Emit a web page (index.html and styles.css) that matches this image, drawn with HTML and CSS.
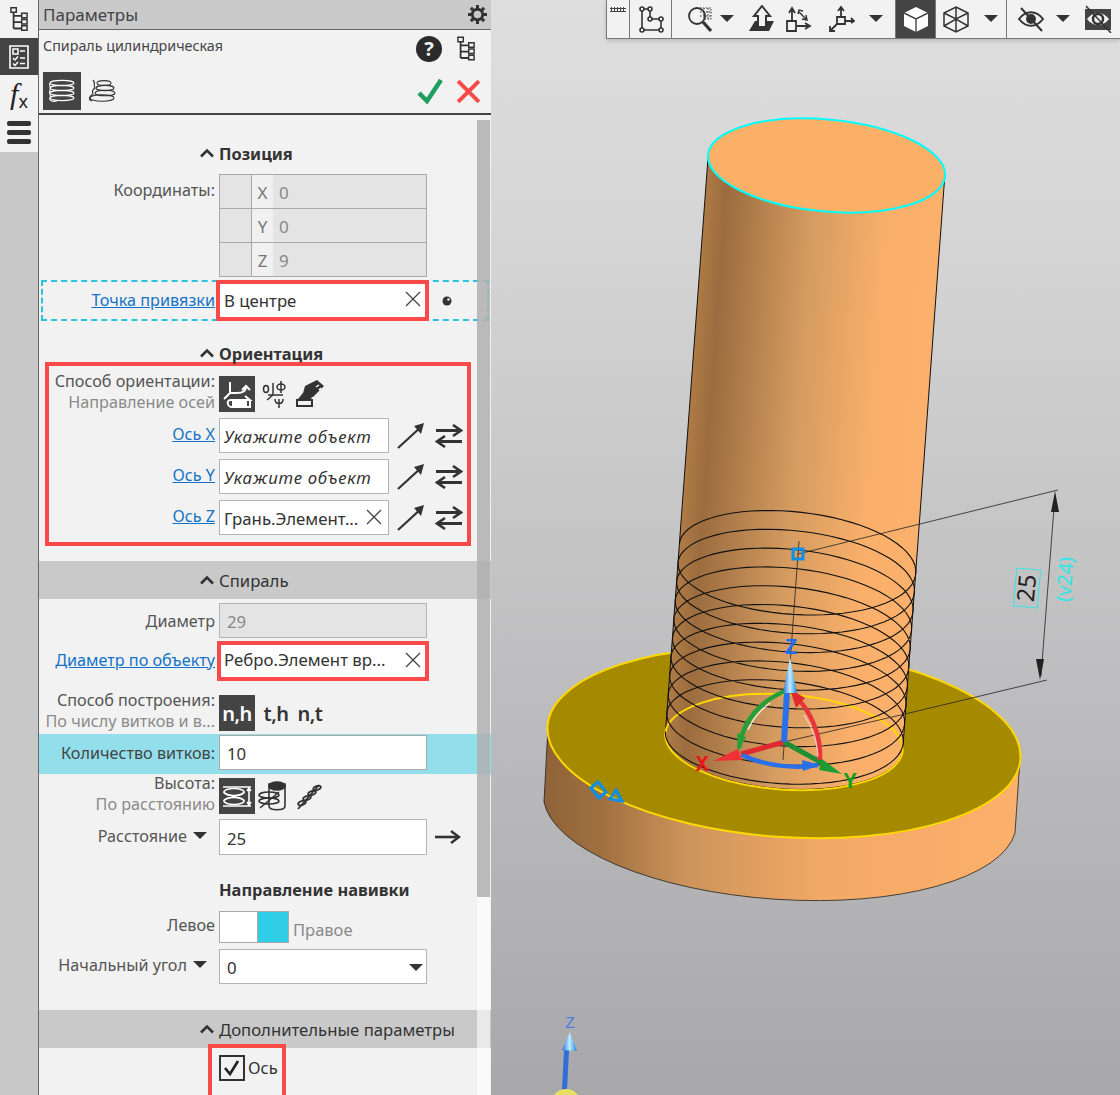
FILE: index.html
```html
<!DOCTYPE html>
<html lang="ru">
<head>
<meta charset="utf-8">
<title>Параметры</title>
<link rel="stylesheet" href="styles.css">
</head>
<body>
<svg class="defs" aria-hidden="true">
  <symbol id="tree" viewBox="0 0 20 26">
    <path d="M4 3V23M4 9H14M4 16H14M4 23H14" fill="none" stroke="currentColor" stroke-width="2"/>
    <path d="M1 0H7V5H1ZM13 6H19V11H13ZM13 13H19V18H13ZM13 20H19V25H13Z" fill="#f2f2f2" stroke="currentColor" stroke-width="1.6"/>
  </symbol>
  <symbol id="chev" viewBox="0 0 16 10"><path d="M2 8.5L8 2.5L14 8.5" fill="none" stroke="#333" stroke-width="2.6"/></symbol>
  <symbol id="caret" viewBox="0 0 14 8"><path d="M0 0H14L7 7Z" fill="#333"/></symbol>
  <symbol id="cross" viewBox="0 0 16 16"><path d="M1 1L15 15M15 1L1 15" stroke="#444" stroke-width="1.3" fill="none"/></symbol>
  <symbol id="diag" viewBox="0 0 28 26"><path d="M1 25L25 3" stroke="#333" stroke-width="2.2"/><path d="M27 0L24 11L17 3Z" fill="#333"/></symbol>
  <symbol id="swap" viewBox="0 0 28 24">
    <path d="M1 6.5H25M27 17.5H3" stroke="#333" stroke-width="2.8" fill="none"/>
    <path d="M18 1L26 6.500L18 12M10 12L2 17.500L10 23" stroke="#333" stroke-width="2.6" fill="none"/>
  </symbol>
</svg>

<div class="app">
  <nav class="rail">
    <div class="rail-btn"><svg class="ico-tree"><use href="#tree"/></svg></div>
    <div class="rail-btn rail-active">
      <svg class="ico-list" viewBox="0 0 20 24">
        <path d="M1 1H19V23H1Z" fill="none" stroke="#fff" stroke-width="1.600"/>
        <path d="M4 4H9V9H4Z" fill="none" stroke="#fff" stroke-width="1.500"/>
        <path d="M11 6H16M11 13H16M11 18.500H16M4 13L6 15L9 11.500M4 18.500L6 20.500L9 17" fill="none" stroke="#fff" stroke-width="1.500"/>
      </svg>
    </div>
    <div class="rail-btn rail-fx"><span class="fx-f">f</span><span class="fx-x">x</span></div>
    <div class="rail-btn rail-menu"><i class="bar"></i><i class="bar"></i><i class="bar"></i></div>
  </nav>

  <section class="panel">
    <header class="titlebar">
      <span class="title">Параметры</span>
      <svg class="ico-gear" viewBox="0 0 20 20">
        <circle cx="10" cy="10" r="5.500" fill="none" stroke="#333" stroke-width="3"/>
        <path d="M10 0V4M10 16V20M0 10H4M16 10H20M3 3L6 6M14 14L17 17M17 3L14 6M6 14L3 17" stroke="#333" stroke-width="3.200"/>
      </svg>
    </header>

    <div class="cmd">
      <div class="cmd-top">
        <span class="cmd-name">Спираль цилиндрическая</span>
        <div class="cmd-tools">
          <div class="help">?</div>
          <svg class="ico-tree-sm"><use href="#tree"/></svg>
        </div>
      </div>
      <div class="cmd-bottom">
        <div class="tab tab-active">
          <svg class="ico-spiral" viewBox="0 0 30 28" fill="none" stroke="#fff" stroke-width="1.100">
            <ellipse cx="15" cy="6" rx="12" ry="2.600"/><ellipse cx="15" cy="11" rx="12" ry="2.600"/><ellipse cx="15" cy="16" rx="12" ry="2.600"/><ellipse cx="15" cy="21" rx="12" ry="2.600"/>
            <path d="M3 6C1 9 5 10 3 13C1 16 5 18 3 21C2 24 6 25 10 24"/>
          </svg>
        </div>
        <div class="tab">
          <svg class="ico-spiral" viewBox="0 0 30 28" fill="none" stroke="#333" stroke-width="1.100">
            <ellipse cx="17" cy="6" rx="7" ry="2.400"/><ellipse cx="18" cy="11" rx="9" ry="2.600"/><ellipse cx="18" cy="16" rx="10" ry="2.800"/><ellipse cx="15" cy="21" rx="12" ry="3.200"/>
            <path d="M6 3C9 6 6 8 8 11C5 13 5 15 6 17C2 19 1 23 5 24"/>
          </svg>
        </div>
        <div class="cmd-actions">
          <svg class="ico-ok" viewBox="0 0 26 26"><path d="M2 15L10 23L24 2" fill="none" stroke="#1f9d5c" stroke-width="4.500"/></svg>
          <svg class="ico-no" viewBox="0 0 24 24"><path d="M2 2L22 22M22 2L2 22" fill="none" stroke="#f94a4a" stroke-width="3.800"/></svg>
        </div>
      </div>
    </div>

    <div class="scroll">
      <div class="thumb"></div>
      <div class="track"></div>

      <div class="head head-first">
        <span class="head-chev"><svg class="ico-chev"><use href="#chev"/></svg></span>
        <b class="head-text">Позиция</b>
      </div>

      <div class="row coord-row">
        <span class="label label-top">Координаты:</span>
        <div class="coords">
          <div class="coord"><i class="c-blank"></i><span class="c-axis">X</span><span class="c-val">0</span></div>
          <div class="coord"><i class="c-blank"></i><span class="c-axis">Y</span><span class="c-val">0</span></div>
          <div class="coord"><i class="c-blank"></i><span class="c-axis">Z</span><span class="c-val">9</span></div>
        </div>
      </div>

      <div class="anchor">
        <a class="link label anchor-label">Точка привязки</a>
        <div class="redfield anchor-field"><span>В центре</span><svg class="ico-cross"><use href="#cross"/></svg></div>
        <svg class="ico-dot" viewBox="0 0 10 10"><circle cx="5" cy="5" r="4.500" fill="#333"/><circle cx="6.500" cy="3.500" r="1.200" fill="#fff"/></svg>
      </div>

      <div class="head head-orient">
        <span class="head-chev"><svg class="ico-chev"><use href="#chev"/></svg></span>
        <b class="head-text">Ориентация</b>
      </div>

      <div class="redbox">
        <div class="row-in row-icons">
          <div class="label label-stack"><span>Способ ориентации:</span><span class="sub">Направление осей</span></div>
          <div class="iconset">
            <div class="sq sq-active">
              <svg class="ico-sq" viewBox="0 0 36 36" fill="none" stroke="#fff" stroke-width="2">
                <path d="M11 6V17L5 23M11 17H18C25 17 27 14 27 11M23 14L27 10L31 14"/><path d="M26 20L31 24H12C9 24 8 26 9 28C9 30 12 31 14 31H31V24"/><path d="M13 25H28V30H13Z" fill="#fff" stroke="none"/>
              </svg>
            </div>
            <div class="sq">
              <svg class="ico-sq" viewBox="0 0 36 36" fill="none" stroke="#333" stroke-width="1.500">
                <path d="M18 7V19L12 24M13 19H28"/><ellipse cx="11" cy="13" rx="2.500" ry="3.500"/><ellipse cx="26" cy="11" rx="4" ry="3"/><path d="M26 5V17"/><path d="M20 23C20 29 28 29 28 23M24 23V32"/>
              </svg>
            </div>
            <div class="sq">
              <svg class="ico-sq" viewBox="0 0 36 36">
                <path d="M14 10L26 4L33 10L22 21H11Z" fill="#333"/><path d="M6 24H21V30H6Z" fill="#f2f2f2" stroke="#333" stroke-width="2"/><path d="M7 23L12 17H23L20 23Z" fill="#333"/><path d="M25 11L28 9M28 14L30 12" stroke="#fff" stroke-width="1.500"/>
              </svg>
            </div>
          </div>
        </div>
        <div class="row-in row-axis row-x">
          <a class="link label">Ось X</a>
          <div class="field field-short field-hint">Укажите объект</div>
          <svg class="ico-diag"><use href="#diag"/></svg><svg class="ico-swap"><use href="#swap"/></svg>
        </div>
        <div class="row-in row-axis">
          <a class="link label">Ось Y</a>
          <div class="field field-short field-hint">Укажите объект</div>
          <svg class="ico-diag"><use href="#diag"/></svg><svg class="ico-swap"><use href="#swap"/></svg>
        </div>
        <div class="row-in row-axis">
          <a class="link label">Ось Z</a>
          <div class="field field-short field-between field-clear"><span>Грань.Элемент...</span><svg class="ico-cross"><use href="#cross"/></svg></div>
          <svg class="ico-diag"><use href="#diag"/></svg><svg class="ico-swap"><use href="#swap"/></svg>
        </div>
      </div>

      <div class="band band-spiral">
        <span class="head-chev"><svg class="ico-chev"><use href="#chev"/></svg></span>
        <span class="head-text">Спираль</span>
      </div>

      <div class="row row-diam">
        <span class="label">Диаметр</span>
        <div class="field field-wide field-off">29</div>
      </div>

      <div class="row row-obj">
        <a class="link label">Диаметр по объекту</a>
        <div class="redfield obj-field"><span>Ребро.Элемент вр...</span><svg class="ico-cross"><use href="#cross"/></svg></div>
      </div>

      <div class="row row-build">
        <div class="label label-stack"><span>Способ построения:</span><span class="sub">По числу витков и в...</span></div>
        <div class="iconset">
          <div class="sq sq-active sq-text">n,h</div>
          <div class="sq sq-text">t,h</div>
          <div class="sq sq-text">n,t</div>
        </div>
      </div>

      <div class="row row-turns">
        <span class="label">Количество витков:</span>
        <div class="field field-wide field-num">10</div>
      </div>

      <div class="row row-height">
        <div class="label label-stack"><span>Высота:</span><span class="sub">По расстоянию</span></div>
        <div class="iconset">
          <div class="sq sq-active">
            <svg class="ico-sq" viewBox="0 0 36 36" fill="none" stroke="#fff" stroke-width="1.600">
              <path d="M4 9H32M4 28H32"/><ellipse cx="15" cy="14" rx="10" ry="3.500"/><ellipse cx="15" cy="23" rx="10" ry="3.500"/><path d="M5 14C5 18 25 19 25 23M25 14C25 18 5 19 5 23"/><path d="M30 10V27M28 13L30 10L32 13M28 24L30 27L32 24"/>
            </svg>
          </div>
          <div class="sq">
            <svg class="ico-sq" viewBox="0 0 36 36" fill="none" stroke="#333" stroke-width="1.600">
              <path d="M14 6V28C14 33 30 33 30 28V6Z"/><ellipse cx="22" cy="8" rx="8" ry="4" fill="#333"/><ellipse cx="14" cy="17" rx="10" ry="3"/><ellipse cx="14" cy="23" rx="10" ry="3"/><path d="M5 30L24 14"/>
            </svg>
          </div>
          <div class="sq">
            <svg class="ico-sq" viewBox="0 0 36 36" fill="none" stroke="#333" stroke-width="1.800">
              <path d="M7 31L28 7"/><ellipse cx="11" cy="25" rx="4" ry="2" transform="rotate(-20 11 25)"/><ellipse cx="16" cy="20" rx="4" ry="2" transform="rotate(-20 16 20)"/><ellipse cx="21" cy="15" rx="4" ry="2" transform="rotate(-20 21 15)"/><ellipse cx="26" cy="10" rx="4" ry="2" transform="rotate(-20 26 10)"/>
            </svg>
          </div>
        </div>
      </div>

      <div class="row row-dist">
        <span class="label label-drop"><span>Расстояние</span><svg class="ico-caret"><use href="#caret"/></svg></span>
        <div class="field field-wide field-num">25</div>
        <svg class="ico-right" viewBox="0 0 26 14"><path d="M0 7H23" stroke="#333" stroke-width="2.600"/><path d="M16 1L24 7L16 13" fill="none" stroke="#333" stroke-width="2.400"/></svg>
      </div>

      <div class="row row-wind"><span></span><b class="head-text">Направление навивки</b></div>

      <div class="row row-toggle">
        <span class="label">Левое</span>
        <div class="toggle"><i class="t-off"></i><i class="t-on"></i></div>
        <span class="toggle-label">Правое</span>
      </div>

      <div class="row row-angle">
        <span class="label label-drop"><span>Начальный угол</span><svg class="ico-caret"><use href="#caret"/></svg></span>
        <div class="field field-wide field-num field-between"><span>0</span><svg class="ico-caret ico-caret-in"><use href="#caret"/></svg></div>
      </div>

      <div class="band band-extra">
        <span class="head-chev"><svg class="ico-chev"><use href="#chev"/></svg></span>
        <span class="head-text">Дополнительные параметры</span>
      </div>

      <div class="check-red">
        <svg class="ico-check" viewBox="0 0 26 26"><rect x="1" y="1" width="24" height="24" fill="#f2f2f2" stroke="#333" stroke-width="2"/><path d="M6 13L11 19L19 6" fill="none" stroke="#222" stroke-width="2.600"/></svg>
        <span class="check-text">Ось</span>
      </div>
    </div>
  </section>

  <main class="view">
    <svg class="scene" viewBox="491 0 629 1095">
      <defs>
        <linearGradient id="discSide" gradientUnits="userSpaceOnUse" x1="544" y1="0" x2="1020" y2="0">
          <stop offset="0" stop-color="#8f6238"/><stop offset=".12" stop-color="#a0703f"/><stop offset=".3" stop-color="#cd945a"/><stop offset=".6" stop-color="#f3aa66"/><stop offset="1" stop-color="#fbb06b"/>
        </linearGradient>
        <linearGradient id="shaft" gradientUnits="userSpaceOnUse" x1="686" y1="445" x2="925" y2="462">
          <stop offset="0" stop-color="#b07c46"/><stop offset=".09" stop-color="#9b6c3e"/><stop offset=".45" stop-color="#d49b60"/><stop offset=".78" stop-color="#fab06a"/><stop offset="1" stop-color="#fbb16b"/>
        </linearGradient>
        <linearGradient id="coneZ" x1="0" y1="0" x2="1" y2="0"><stop offset="0" stop-color="#2a6fe0"/><stop offset=".5" stop-color="#bdeeff"/><stop offset="1" stop-color="#2a80e0"/></linearGradient>
      </defs>

      <path d="M548 727L544 802A237 90 4 0 0 1015 833L1020 759Z" fill="url(#discSide)" stroke="#222" stroke-width=".8"/>
      <ellipse cx="784" cy="742.500" rx="237" ry="94.500" transform="rotate(4 784 742.500)" fill="#a58a00" stroke="#ffd800" stroke-width="2"/>

      <path d="M708 158L665.300 733.700A119 47.500 4 0 0 902.700 750.300L945 173Z" fill="url(#shaft)" stroke="#111" stroke-width="1"/>
      <ellipse cx="784" cy="742" rx="119" ry="47.500" transform="rotate(4 784 742)" fill="none" stroke="#ffd800" stroke-width="2"/>
      <ellipse cx="826.500" cy="165.500" rx="119" ry="46" transform="rotate(5.200 826.500 165.500)" fill="#fbb068" stroke="#00ffff" stroke-width="2"/>

      <path class="helix" id="helix" d=""/>

      <path class="thin" d="M799 541L783 760M798 554L1058 490M905 714L1047 680M784 742L905 714"/>
      <path class="thin" d="M1055 495L1041 676"/>
      <path d="M1055 491L1051 512H1059ZM1040 680L1036 659H1044Z" fill="#222"/>
      <g transform="rotate(-85 1027 588)">
        <rect class="dimbox" x="1008" y="576" width="38" height="24"/>
        <text class="dim" x="1027" y="596">25</text>
        <text class="dim dim-cyan" x="1039" y="632">(v24)</text>
      </g>

      <rect class="grip" x="793" y="549" width="10" height="10"/>
      <path class="grip" d="M591 788L598 782L606 792L599 798Z"/>
      <path class="grip" d="M610 799L616 790L622 801Z"/>

      <path d="M741 754L784 742" stroke="#e02a30" stroke-width="5" fill="none"/>
      <path d="M784 742L822 763" stroke="#1f8f35" stroke-width="5" fill="none"/>
      <path d="M784 742L787 692" stroke="#2a70e8" stroke-width="6" fill="none"/>
      <path d="M788 690C760 700 742 722 739 748" stroke="#25a038" stroke-width="4.500" fill="none"/>
      <path d="M748 730C752 720 758 712 770 703" stroke="#e4f4e4" stroke-width="1.400" fill="none"/>
      <path d="M737 733L746 737L738 752Z" fill="#25a038"/>
      <path d="M792 692C812 712 821 735 820 760" stroke="#e8343a" stroke-width="4.500" fill="none"/>
      <path d="M804 715C812 726 817 742 818 756" stroke="#f8c8c8" stroke-width="1.200" fill="none"/>
      <path d="M790 689L805 698L796 708Z" fill="#e02a30"/>
      <path d="M742 755C765 766 795 769 818 765" stroke="#2a70e8" stroke-width="4.500" fill="none"/>
      <path d="M802 760L820 765L803 771Z" fill="#2a70e8"/>
      <path d="M790 657L797 693L783 693Z" fill="url(#coneZ)"/>
      <path d="M713 761L738 749L742 760Z" fill="#ee3238"/>
      <path d="M842 774L822 759L819 770Z" fill="#1e9c34"/>
      <text class="axis axis-z" x="791" y="654">Z</text>
      <text class="axis axis-x" x="702" y="771">X</text>
      <text class="axis axis-y" x="850" y="788">Y</text>

      <path d="M564 1050L569 1050L567 1090L562 1090Z" fill="#2f6fd8"/>
      <path d="M570 1032L577 1051L562 1050Z" fill="url(#coneZ)"/>
      <circle cx="566" cy="1104" r="15" fill="#e6e060"/>
      <text class="axis-small" x="570" y="1028">Z</text>
    </svg>

    <div class="toolbar">
      <div class="tb-cell tb-grip"><i class="dots"></i></div>
      <div class="tb-cell tb-sketch">
        <svg class="tb-ico" viewBox="0 0 28 28" fill="none" stroke="#333" stroke-width="1.600">
          <path d="M5 4V25H24V14H13V4Z"/><circle cx="5" cy="4" r="2" fill="#f2f2f2"/><circle cx="13" cy="4" r="2" fill="#f2f2f2"/><circle cx="13" cy="14" r="2" fill="#f2f2f2"/><circle cx="24" cy="14" r="2" fill="#f2f2f2"/><circle cx="5" cy="25" r="2" fill="#f2f2f2"/><circle cx="24" cy="25" r="2" fill="#f2f2f2"/>
        </svg>
      </div>
      <div class="tb-group tb-middle">
        <svg class="tb-ico" viewBox="0 0 28 28" fill="none" stroke="#333">
          <circle cx="11" cy="11" r="8" stroke-width="1.800"/><path d="M17 17L25 26" stroke-width="3.200"/><path d="M14 3H25V14H17M14 7H25M14 11H25M18 3V14M22 3V14" stroke-width="1" stroke-dasharray="1.500 1.500"/>
        </svg>
        <svg class="tb-caret tb-caret-a"><use href="#caret"/></svg>
        <svg class="tb-ico tb-up" viewBox="0 0 28 28"><path d="M14 1L22 11H18V22H10V11H6Z" fill="#f2f2f2" stroke="#333" stroke-width="2"/><path d="M7 16H10V23H18V16H26L21 26H1Z" fill="#333"/></svg>
        <svg class="tb-ico tb-rot" viewBox="0 0 28 28" fill="none" stroke="#333" stroke-width="1.800"><path d="M3 16H12V26H3Z"/><path d="M8 15V5M5 8L8 3L11 8M13 21H24M21 18L26 21L21 24"/><path d="M14 6L22 14M14 9L15 5L19 6M22 10L23 15L18 14" stroke-width="1.400"/></svg>
        <svg class="tb-ico tb-axes" viewBox="0 0 28 28" fill="none" stroke="#333" stroke-width="1.800"><path d="M10 12H18V19H10Z"/><path d="M14 12V3M11 6L14 2L17 6M18 16H27M24 13L27 16L24 18M10 19L3 26M3 21V26H8"/></svg>
        <svg class="tb-caret tb-caret-b"><use href="#caret"/></svg>
      </div>
      <div class="tb-cell tb-active">
        <svg class="tb-ico" viewBox="0 0 28 28"><path d="M14 2L26 8V21L14 27L2 21V8Z" fill="#fff"/><path d="M2 8L14 14L26 8M14 14V27" stroke="#444" stroke-width="1.400" fill="none"/></svg>
      </div>
      <div class="tb-group tb-wire">
        <svg class="tb-ico" viewBox="0 0 28 28" fill="none" stroke="#333" stroke-width="1.500"><path d="M14 2L26 8V21L14 27L2 21V8ZM2 8L14 14L26 8M14 14V27M2 21L14 14L26 21M14 2V14"/></svg>
        <svg class="tb-caret tb-caret-c"><use href="#caret"/></svg>
      </div>
      <div class="tb-group tb-eyes">
        <svg class="tb-ico" viewBox="0 0 28 28" fill="none" stroke="#333" stroke-width="2"><path d="M2 14C9 5 19 5 26 14C19 23 9 23 2 14Z"/><circle cx="14" cy="14" r="4" fill="#333"/><path d="M4 3L25 26"/></svg>
        <svg class="tb-caret tb-caret-d"><use href="#caret"/></svg>
        <svg class="tb-ico tb-last" viewBox="0 0 28 28"><path d="M1 4H27V25H1Z" fill="#444"/><path d="M3 14C9 6 19 6 25 14C19 22 9 22 3 14Z" fill="#f2f2f2"/><circle cx="14" cy="14" r="5" fill="none" stroke="#333" stroke-width="2.500"/><path d="M2 1L27 28" stroke="#333" stroke-width="1.500"/></svg>
      </div>
    </div>
  </main>
</div>
<script src="script.js"></script>
</body>
</html>
```

FILE: styles.css
```css
* { box-sizing: border-box; }
html, body { margin: 0; padding: 0; }
body {
  width: 1120px;
  height: 1095px;
  overflow: hidden;
  font-family: "Noto Sans", "Open Sans", sans-serif;
  font-size: 16.5px;
  color: #333;
}
.defs { width: 0; height: 0; display: block; }
.app { display: flex; width: 1120px; height: 1095px; overflow: hidden; }

/* left rail */
.rail { width: 38px; flex: none; background: #c8c8c8; display: flex; flex-direction: column; }
.rail-btn { height: 38px; background: #f2f2f2; color: #333; display: flex; align-items: center; justify-content: center; }
.rail-active { background: #444; height: 37px; }
.rail-fx { height: 38px; }
.rail-menu { height: 39px; flex-direction: column; gap: 4px; }
.bar { display: block; width: 24px; height: 5px; border-radius: 2px; background: #333; }
.ico-tree { width: 18px; height: 25px; }
.ico-list { width: 20px; height: 24px; }
.fx-f { font: italic 30px/38px "Liberation Serif", serif; color: #222; }
.fx-x { font: 18px/18px "Noto Sans", sans-serif; margin-top: 14px; color: #222; }

/* panel */
.panel { width: 453px; flex: none; border-left: 1px solid #666; background: #f2f2f2; display: flex; flex-direction: column; height: 1095px; overflow: hidden; }
.titlebar { height: 30px; flex: none; background: #c9c9c9; border-bottom: 1px solid #666; display: flex; align-items: center; justify-content: space-between; padding: 0 3px 0 4px; }
.title { font-size: 17px; color: #444; }
.ico-gear { width: 19px; height: 19px; margin-bottom: 1px; margin-right: 1px; }
.cmd { height: 85px; flex: none; border-bottom: 2px solid #444; display: flex; flex-direction: column; padding: 0 8px 2px 4px; }
.cmd-top { height: 40px; display: flex; justify-content: space-between; align-items: flex-start; }
.cmd-name { font-size: 14.300px; line-height: 18px; margin-top: 7px; color: #444; }
.cmd-tools { display: flex; align-items: center; gap: 15px; padding-top: 6px; padding-right: 8px; }
.help { width: 26px; height: 26px; border-radius: 50%; background: #2b2b2b; color: #f2f2f2; font-weight: 700; font-size: 20px; line-height: 26px; text-align: center; }
.ico-tree-sm { width: 18px; height: 26px; color: #333; }
.cmd-bottom { flex: 1; display: flex; align-items: flex-start; padding-top: 2px; }
.tab { width: 38px; height: 38px; display: flex; align-items: center; justify-content: center; margin-right: 2px; }
.tab-active { background: #444; }
.ico-spiral { width: 30px; height: 28px; }
.cmd-actions { margin-left: auto; display: flex; align-items: center; gap: 13px; padding-top: 6px; padding-right: 2px; }
.ico-ok { width: 26px; height: 26px; }
.ico-no { width: 25px; height: 25px; }

/* scroll body */
.scroll { position: relative; flex: 1; min-height: 0; overflow: hidden; }
.thumb { position: absolute; z-index: 2; left: 438px; top: 5px; width: 13px; height: 777px; background: rgba(176, 176, 176, .85); }
.track { position: absolute; z-index: 2; left: 438px; top: 782px; width: 13px; height: 200px; background: rgba(255, 255, 255, .6); }

.head, .band { height: 38px; display: grid; grid-template-columns: 176px 1fr; column-gap: 4px; align-items: center; }
.head-first { margin-top: 19px; }
.head-orient { margin-top: 13px; }
.head-chev { display: flex; justify-content: flex-end; }
.ico-chev { width: 16px; height: 10px; }
.head-text { font-size: 16.700px; color: #333; }
b.head-text { font-weight: 700; font-size: 16.400px; }
.band { background: #c9c9c9; }
.band-spiral { margin-top: 15px; }
.band-extra { margin-top: 26px; }

.row { display: grid; grid-template-columns: 176px auto 1fr; column-gap: 4px; align-items: center; }
.label { display: block; text-align: right; color: #555; font-size: 16.200px; line-height: 20px; white-space: nowrap; }
.label-top { align-self: start; margin-top: 6px; }
.link { color: #1272c9; text-decoration: underline; }
.label-stack { display: flex; flex-direction: column; align-items: flex-end; line-height: 21px; margin-top: -4px; }
.sub { color: #8a8a8a; }
.label-drop { display: flex; justify-content: flex-end; align-items: center; gap: 6px; padding-right: 8px; }
.ico-caret { width: 14px; height: 8px; }
.ico-caret-in { margin-right: -1px; }

.coord-row { margin-top: 2px; }
.coords { width: 208px; border: 1px solid #aaa; border-bottom: 0; }
.coord { display: flex; height: 34px; border-bottom: 1px solid #aaa; background: #e4e4e4; color: #888; font-size: 17px; }
.c-blank { width: 32px; border-right: 1px solid #aaa; }
.c-axis { width: 21px; background: #f0f0f0; text-align: center; line-height: 36px; color: #777; }
.c-val { padding-left: 6px; line-height: 36px; }

.anchor { margin: 3px 2px 0 2px; height: 41px; border: 2px dashed #2cc3de; border-radius: 0; display: grid; grid-template-columns: 172px 213px auto; align-items: center; column-gap: 1px; }
.anchor-label { margin-top: -2px; }
.redfield { background: #fff; border: 4px solid #f94a4a; display: flex; align-items: center; justify-content: space-between; color: #333; padding: 0 4px 0 4px; font-size: 16.800px; }
.anchor-field { height: 41px; margin: -2px 0; }
.ico-cross { width: 16px; height: 16px; flex: none; margin-top: -3px; }
.ico-dot { width: 10px; height: 10px; margin-left: 12px; }

.redbox { margin: -10px 0 0 6px; width: 426px; height: 184px; border: 4px solid #f94a4a; }
.row-in { display: grid; grid-template-columns: 166px auto auto auto; column-gap: 4px; align-items: center; justify-content: start; }
.row-icons { margin-top: 9px; height: 36px; grid-template-columns: 166px auto; }
.row-axis { margin-top: 6px; }
.row-x { margin-top: 7px; }
.row-axis .label { align-self: start; margin-top: 6px; }

.field { height: 35px; background: #fff; border: 1px solid #b4b4b4; display: flex; align-items: center; padding: 2px 4px 0; color: #333; white-space: nowrap; font-size: 16.800px; }
.field-short { width: 170px; }
.field-wide { width: 208px; }
.field-num { padding-left: 7px; }
.field-hint { font-style: italic; letter-spacing: .7px; }
.field-between { justify-content: space-between; }
.field-clear { padding-right: 6px; }
.field-off { background: #e4e4e4; color: #888; padding-left: 7px; }
.ico-diag { width: 28px; height: 26px; margin-left: 4px; }
.ico-swap { width: 28px; height: 24px; margin-left: 6px; }

.iconset { display: flex; }
.sq { width: 36px; height: 36px; display: flex; align-items: center; justify-content: center; }
.sq-active { background: #444; }
.ico-sq { width: 36px; height: 36px; }
.sq-text { font-size: 20px; font-weight: 600; letter-spacing: -.5px; color: #333; width: 34px; }
.sq-active.sq-text { color: #fff; width: 36px; margin-right: 4px; }

.row-diam { margin-top: 4px; height: 35px; }
.row-obj { margin-top: 3px; grid-template-columns: 176px auto; column-gap: 2px; }
.row-obj .label { margin-top: -2px; }
.obj-field { width: 212px; height: 40px; padding-bottom: 3px; padding-left: 3px; }
.obj-field .ico-cross { margin-top: 0; }
.row-build { margin-top: 13px; height: 36px; }
.row-build .sub { overflow: hidden; }
.row-turns { margin-top: 4px; height: 40px; background: #92dfeb; }
.row-turns .field { height: 35px; margin-top: -3px; border-color: #aaa; }
.row-turns .label { color: #444; margin-top: -3px; }
.row-height { margin-top: 3px; height: 36px; }
.row-dist { margin-top: 6px; height: 36px; }
.row-dist .field { height: 36px; }
.row-dist .label { margin-top: -3px; }
.ico-right { width: 26px; height: 14px; margin-left: 4px; }
.row-wind { margin-top: 22px; height: 24px; }
.row-toggle { margin-top: 10px; height: 32px; grid-template-columns: 176px 70px 1fr; }
.row-toggle .label { margin-top: -4px; }
.toggle { height: 32px; border: 1px solid #aaa; display: flex; }
.t-off { width: 38px; background: #fff; border-right: 1px solid #aaa; }
.t-on { flex: 1; background: #2fcde6; }
.toggle-label { color: #8a8a8a; margin-top: 4px; }
.row-angle { margin-top: 6px; height: 35px; }
.row-angle .label { margin-top: -3px; }

.check-red { margin: -4px 0 0 169px; width: 78px; height: 60px; border: 4px solid #f94a4a; display: flex; align-items: flex-start; padding: 7px 0 0 7px; gap: 3px; }
.ico-check { width: 26px; height: 26px; flex: none; }
.check-text { line-height: 26px; }

/* 3D view */
.view { position: relative; flex: 1; height: 1095px; background: linear-gradient(#dedede, #d6d6d6 20%, #a8a7aa); overflow: hidden; }
.scene { position: absolute; left: 0; top: 0; width: 629px; height: 1095px; }
.helix { fill: none; stroke: #111; stroke-width: 1.100; }
.thin { fill: none; stroke: #222; stroke-width: .8; }
.grip { fill: none; stroke: #0b8fe8; stroke-width: 3; }
.dimbox { fill: none; stroke: #30e6e6; stroke-width: 1; }
.dim { font: 24px "Noto Sans", sans-serif; text-anchor: middle; fill: #222; }
.dim-cyan { font-size: 20px; fill: #30e6e6; }
.axis { font: 700 22px "Liberation Mono", monospace; text-anchor: middle; }
.axis-z { fill: #1f6ff0; }
.axis-x { fill: #f01414; }
.axis-y { fill: #10a020; }
.axis-small { font: 16px "Liberation Mono", monospace; text-anchor: middle; fill: #4a7fe0; }

.toolbar { position: absolute; left: 115px; top: 0; width: 514px; height: 39px; background: #f2f2f2; border-left: 1px solid #777; border-bottom: 1px solid #777; box-shadow: 0 2px 4px rgba(0,0,0,.15); display: flex; }
.tb-cell, .tb-group { height: 38px; display: flex; align-items: center; border-right: 1px solid #777; }
.tb-grip { width: 23px; justify-content: center; align-items: flex-start; padding-top: 7px; }
.dots { display: block; width: 16px; height: 5px; background-image: radial-gradient(#444 1px, transparent 1.200px); background-size: 3px 3px; }
.tb-sketch { width: 42px; justify-content: center; }
.tb-middle { width: 224px; padding-left: 14px; }
.tb-active { width: 40px; justify-content: center; background: #444; }
.tb-wire { width: 71px; padding-left: 6px; }
.tb-eyes { flex: 1; padding-left: 10px; border-right: 0; }
.tb-ico { width: 28px; height: 28px; flex: none; }
.tb-caret { width: 14px; height: 8px; flex: none; }
.tb-caret-a { margin-left: 6px; }
.tb-up { margin-left: 14px; }
.tb-rot { margin-left: 8px; }
.tb-axes { margin-left: 15px; }
.tb-caret-b { margin-left: 14px; }
.tb-caret-c { margin-left: 14px; }
.tb-caret-d { margin-left: 11px; }
.tb-last { margin-left: 14px; }
```

FILE: script.js
```js
// Ten-turn helix on the shaft, projected as an ellipse moving along the axis.
var turns = 10, steps = 720;
var tilt = 5 * Math.PI / 180, rx = 119, ry = 46.5;
var d = "";
for (var i = 0; i <= steps; i++) {
  var t = i / steps * turns;
  var a = Math.PI - 2 * Math.PI * t;
  var ex = rx * Math.cos(a), ey = ry * Math.sin(a);
  var x = 784 + 1.4 * t + ex * Math.cos(tilt) - ey * Math.sin(tilt);
  var y = 742 - 18.8 * t + ex * Math.sin(tilt) + ey * Math.cos(tilt);
  d += (i ? "L" : "M") + x.toFixed(1) + " " + y.toFixed(1);
}
document.getElementById("helix").setAttribute("d", d);
```
